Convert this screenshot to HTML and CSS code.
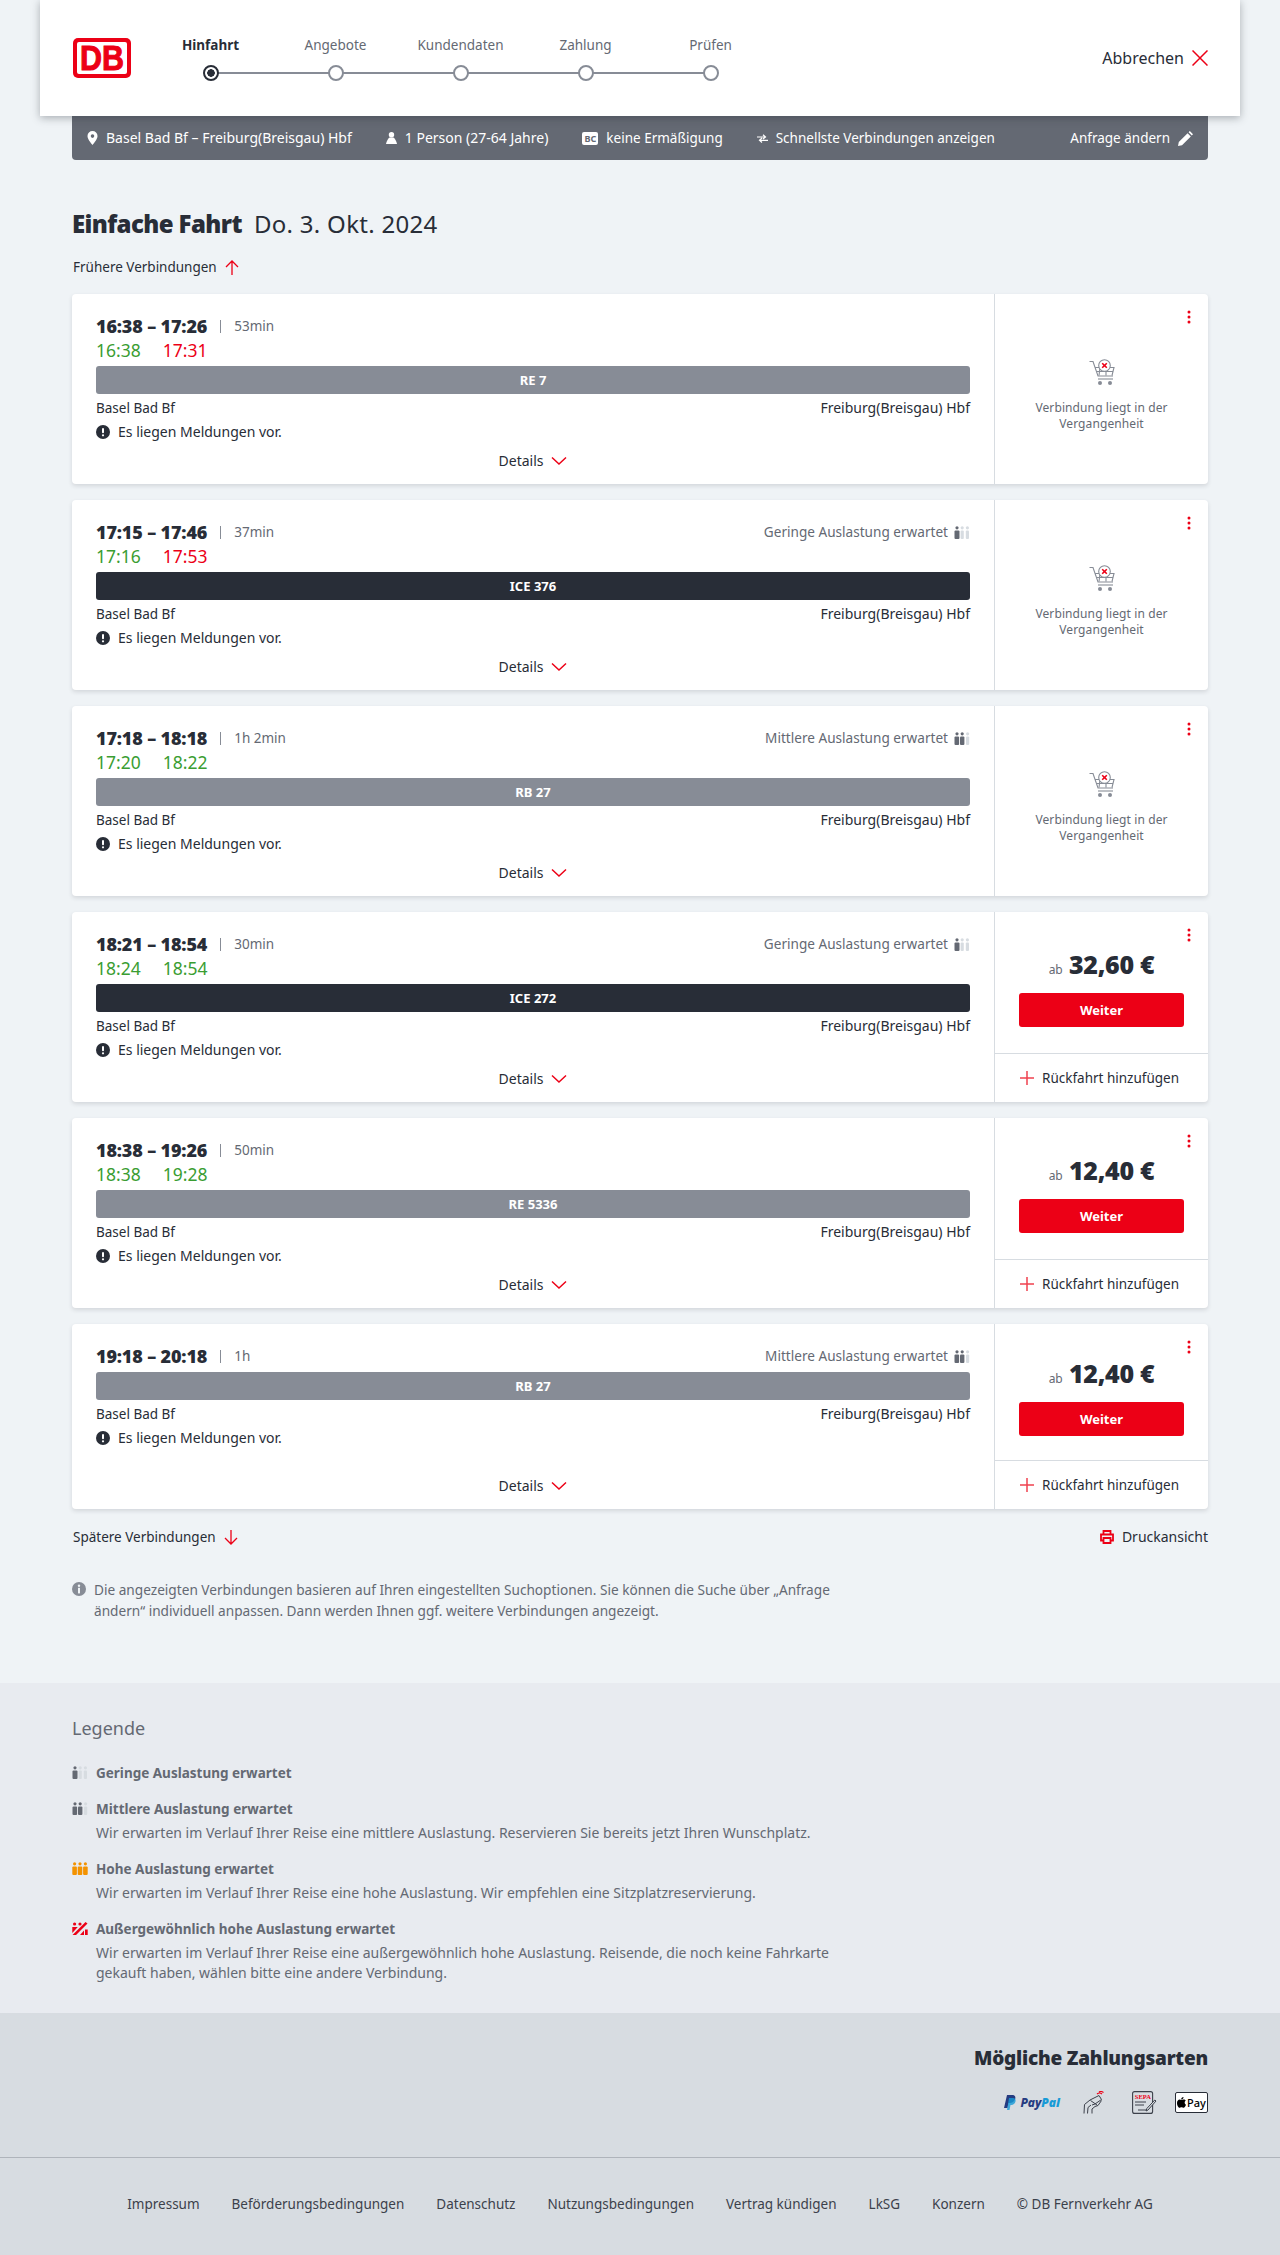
FILE: index.html
```html
<!DOCTYPE html>
<html lang="de">
<head>
  <meta charset="UTF-8">
  <meta name="viewport" content="width=device-width, initial-scale=1.0">
  <title>Hinfahrt - Verbindungen</title>
  <link rel="stylesheet" href="styles.css">
</head>
<body>
  <svg class="icon-defs" xmlns="http://www.w3.org/2000/svg">
    <symbol id="load-1" viewBox="0 0 16 13">
      <circle cx="3" cy="1.8" r="1.6" fill="#646973"/><rect x="0.5" y="4.5" width="5" height="8.5" rx="1" fill="#646973"/>
      <circle cx="8.2" cy="1.8" r="1.6" fill="#d7dce1"/><rect x="6.6" y="4.5" width="3.2" height="8.5" rx="1" fill="#d7dce1"/>
      <circle cx="13.4" cy="1.8" r="1.6" fill="#d7dce1"/><rect x="11.8" y="4.5" width="3.2" height="8.5" rx="1" fill="#d7dce1"/>
    </symbol>
    <symbol id="load-2" viewBox="0 0 16 13">
      <circle cx="3" cy="1.8" r="1.6" fill="#646973"/><rect x="0.5" y="4.5" width="4.6" height="8.5" rx="1" fill="#646973"/>
      <circle cx="8.2" cy="1.8" r="1.6" fill="#646973"/><rect x="6" y="4.5" width="4.4" height="8.5" rx="1" fill="#646973"/>
      <circle cx="13.6" cy="1.8" r="1.6" fill="#d7dce1"/><rect x="12" y="4.5" width="3.2" height="8.5" rx="1" fill="#d7dce1"/>
    </symbol>
    <symbol id="load-3" viewBox="0 0 16 13">
      <circle cx="2.6" cy="1.8" r="1.6" fill="#f39200"/><rect x="0.3" y="4.5" width="4.6" height="8.5" rx="1" fill="#f39200"/>
      <circle cx="8" cy="1.8" r="1.6" fill="#f39200"/><rect x="5.7" y="4.5" width="4.6" height="8.5" rx="1" fill="#f39200"/>
      <circle cx="13.4" cy="1.8" r="1.6" fill="#f39200"/><rect x="11.1" y="4.5" width="4.6" height="8.5" rx="1" fill="#f39200"/>
    </symbol>
    <symbol id="load-4" viewBox="0 0 16 13">
      <circle cx="2.6" cy="2" r="1.6" fill="#ec0016"/><circle cx="8" cy="2" r="1.6" fill="#ec0016"/>
      <path d="M0.3 5h5.500L0.3 11zM13.500 0l2 1.500L4 13H0.500zM8 13l4-4.500V13zM13 7.500h2.700V13H13z" fill="#ec0016"/>
    </symbol>
    <symbol id="kebab" viewBox="0 0 6 14">
      <circle cx="3" cy="2" r="1.5" fill="#ec0016"/><circle cx="3" cy="7" r="1.5" fill="#ec0016"/><circle cx="3" cy="12" r="1.5" fill="#ec0016"/>
    </symbol>
    <symbol id="chevron" viewBox="0 0 16 10">
      <path d="M1 1.5l7 6.5 7-6.5" fill="none" stroke="#ec0016" stroke-width="1.5"/>
    </symbol>
    <symbol id="warn" viewBox="0 0 14 14">
      <circle cx="7" cy="7" r="7" fill="#282d37"/><rect x="6" y="3" width="2" height="5.2" rx="1" fill="#fff"/><circle cx="7" cy="10.3" r="1.1" fill="#fff"/>
    </symbol>
    <symbol id="cart" viewBox="0 0 26 26">
      <g fill="none" stroke="#878c96" stroke-width="1.100">
        <path d="M0.500 2.500h3.500L9 17h15"/>
        <path d="M6 8.500h19l-2 8M7.500 12.500h16.500M11 8.500l-1 8M17 12.500v4"/>
        <circle cx="15.500" cy="6.500" r="5.800" fill="#fff"/>
        <path d="M13.200 4.200l4.600 4.600M17.800 4.200l-4.600 4.600" stroke="#ec0016" stroke-width="1.600"/>
      </g>
      <path d="M9 20h15" stroke="#878c96" stroke-width="1.100"/>
      <circle cx="11" cy="24" r="2" fill="#878c96"/><circle cx="21" cy="24" r="2" fill="#878c96"/>
    </symbol>
    <symbol id="plus" viewBox="0 0 14 14">
      <path d="M7 0v14M0 7h14" stroke="#f0414f" stroke-width="1.500"/>
    </symbol>
  </svg>

  <header class="top-bar">
    <svg class="db-logo" width="58" height="40" viewBox="0 0 58 40">
      <rect width="58" height="40" rx="5" fill="#ec0016"/>
      <rect x="4" y="4" width="50" height="32" rx="2" fill="#fff"/>
      <text x="29" y="32" text-anchor="middle" textLength="44" lengthAdjust="spacingAndGlyphs" class="db-letters">DB</text>
    </svg>
    <ol class="stepper">
      <li class="step step-active"><span class="step-label">Hinfahrt</span><span class="step-dot"></span></li>
      <li class="step"><span class="step-label">Angebote</span><span class="step-dot"></span></li>
      <li class="step"><span class="step-label">Kundendaten</span><span class="step-dot"></span></li>
      <li class="step"><span class="step-label">Zahlung</span><span class="step-dot"></span></li>
      <li class="step"><span class="step-label">Prüfen</span><span class="step-dot"></span></li>
    </ol>
    <a class="cancel">Abbrechen
      <svg width="16" height="16" viewBox="0 0 16 16"><path d="M0.500 0.500l15 15M15.500 0.500l-15 15" stroke="#ec0016" stroke-width="1.500"/></svg>
    </a>
  </header>

  <main class="page">
    <div class="query-bar">
      <span class="query-item query-wide">
        <svg width="11" height="14" viewBox="0 0 11 14"><path fill-rule="evenodd" d="M5.500 0a5 5 0 0 1 5 5c0 3-3 6.500-5 9-2-2.500-5-6-5-9a5 5 0 0 1 5-5zm0 3.300a1.800 1.800 0 1 0 0 3.600 1.800 1.800 0 0 0 0-3.600z" fill="#fff"/></svg>
        Basel Bad Bf – Freiburg(Breisgau) Hbf</span>
      <span class="query-item query-wide">
        <svg width="11" height="12" viewBox="0 0 11 12"><circle cx="5.500" cy="2.800" r="2.700" fill="#fff"/><path d="M3.500 5.500h4c1.500 1 3 4 3.500 6.500H0c.5-2.500 2-5.500 3.500-6.500z" fill="#fff"/></svg>
        1 Person (27-64 Jahre)</span>
      <span class="query-item">
        <span class="bc-badge">BC</span>
        keine Ermäßigung</span>
      <span class="query-item">
        <svg width="11" height="9" viewBox="0 0 11 9"><path d="M0 3h8M6 .8L8.500 3 6 5M11 6.300H3M5 4l-2.500 2.300L5 8.500" fill="none" stroke="#fff" stroke-width="1.200"/></svg>
        Schnellste Verbindungen anzeigen</span>
      <span class="query-item query-edit">Anfrage ändern
        <svg width="15" height="15" viewBox="0 0 15 15"><path d="M0 15l.8-4L9.600 2.200l3.200 3.200L4 14.200zM10.600 1.200L11.800 0 15 3.200 13.800 4.400z" fill="#fff"/></svg>
      </span>
    </div>

    <h1 class="day-title"><strong>Einfache Fahrt</strong> <span>Do. 3. Okt. 2024</span></h1>

    <a class="more-link more-earlier">Frühere Verbindungen
      <svg width="14" height="15" viewBox="0 0 14 15"><path d="M7 15V1M1 7l6-6 6 6" fill="none" stroke="#ec0016" stroke-width="1.300"/></svg>
    </a>

    <article class="card">
      <div class="card-main">
        <div class="time-row"><span class="time-range">16:38 – 17:26</span><span class="duration">53min</span></div>
        <div class="real-row"><span class="on-time">16:38</span><span class="late">17:31</span></div>
        <div class="train train-regio">RE 7</div>
        <div class="stations"><span class="from">Basel Bad Bf</span><span>Freiburg(Breisgau) Hbf</span></div>
        <div class="notice"><svg width="14" height="14"><use href="#warn"/></svg>Es liegen Meldungen vor.</div>
        <a class="details">Details <svg width="16" height="10"><use href="#chevron"/></svg></a>
      </div>
      <aside class="card-side side-past">
        <svg class="kebab" width="6" height="14"><use href="#kebab"/></svg>
        <svg width="26" height="26"><use href="#cart"/></svg>
        <p>Verbindung liegt in der Vergangenheit</p>
      </aside>
    </article>

    <article class="card">
      <div class="card-main">
        <div class="time-row"><span class="time-range">17:15 – 17:46</span><span class="duration">37min</span>
          <span class="load">Geringe Auslastung erwartet <svg width="16" height="13"><use href="#load-1"/></svg></span></div>
        <div class="real-row"><span class="on-time">17:16</span><span class="late">17:53</span></div>
        <div class="train train-ice">ICE 376</div>
        <div class="stations"><span class="from">Basel Bad Bf</span><span>Freiburg(Breisgau) Hbf</span></div>
        <div class="notice"><svg width="14" height="14"><use href="#warn"/></svg>Es liegen Meldungen vor.</div>
        <a class="details">Details <svg width="16" height="10"><use href="#chevron"/></svg></a>
      </div>
      <aside class="card-side side-past">
        <svg class="kebab" width="6" height="14"><use href="#kebab"/></svg>
        <svg width="26" height="26"><use href="#cart"/></svg>
        <p>Verbindung liegt in der Vergangenheit</p>
      </aside>
    </article>

    <article class="card">
      <div class="card-main">
        <div class="time-row"><span class="time-range">17:18 – 18:18</span><span class="duration">1h 2min</span>
          <span class="load">Mittlere Auslastung erwartet <svg width="16" height="13"><use href="#load-2"/></svg></span></div>
        <div class="real-row"><span class="on-time">17:20</span><span class="on-time">18:22</span></div>
        <div class="train train-regio">RB 27</div>
        <div class="stations"><span class="from">Basel Bad Bf</span><span>Freiburg(Breisgau) Hbf</span></div>
        <div class="notice"><svg width="14" height="14"><use href="#warn"/></svg>Es liegen Meldungen vor.</div>
        <a class="details">Details <svg width="16" height="10"><use href="#chevron"/></svg></a>
      </div>
      <aside class="card-side side-past">
        <svg class="kebab" width="6" height="14"><use href="#kebab"/></svg>
        <svg width="26" height="26"><use href="#cart"/></svg>
        <p>Verbindung liegt in der Vergangenheit</p>
      </aside>
    </article>

    <article class="card">
      <div class="card-main">
        <div class="time-row"><span class="time-range">18:21 – 18:54</span><span class="duration">30min</span>
          <span class="load">Geringe Auslastung erwartet <svg width="16" height="13"><use href="#load-1"/></svg></span></div>
        <div class="real-row"><span class="on-time">18:24</span><span class="on-time">18:54</span></div>
        <div class="train train-ice">ICE 272</div>
        <div class="stations"><span class="from">Basel Bad Bf</span><span>Freiburg(Breisgau) Hbf</span></div>
        <div class="notice"><svg width="14" height="14"><use href="#warn"/></svg>Es liegen Meldungen vor.</div>
        <a class="details">Details <svg width="16" height="10"><use href="#chevron"/></svg></a>
      </div>
      <aside class="card-side">
        <svg class="kebab" width="6" height="14"><use href="#kebab"/></svg>
        <div class="offer">
          <div class="price"><small>ab</small> 32,60 €</div>
          <button class="next-btn">Weiter</button>
        </div>
        <a class="return-link"><svg width="14" height="14"><use href="#plus"/></svg>Rückfahrt hinzufügen</a>
      </aside>
    </article>

    <article class="card">
      <div class="card-main">
        <div class="time-row"><span class="time-range">18:38 – 19:26</span><span class="duration">50min</span></div>
        <div class="real-row"><span class="on-time">18:38</span><span class="on-time">19:28</span></div>
        <div class="train train-regio">RE 5336</div>
        <div class="stations"><span class="from">Basel Bad Bf</span><span>Freiburg(Breisgau) Hbf</span></div>
        <div class="notice"><svg width="14" height="14"><use href="#warn"/></svg>Es liegen Meldungen vor.</div>
        <a class="details">Details <svg width="16" height="10"><use href="#chevron"/></svg></a>
      </div>
      <aside class="card-side">
        <svg class="kebab" width="6" height="14"><use href="#kebab"/></svg>
        <div class="offer">
          <div class="price"><small>ab</small> 12,40 €</div>
          <button class="next-btn">Weiter</button>
        </div>
        <a class="return-link"><svg width="14" height="14"><use href="#plus"/></svg>Rückfahrt hinzufügen</a>
      </aside>
    </article>

    <article class="card card-short">
      <div class="card-main">
        <div class="time-row"><span class="time-range">19:18 – 20:18</span><span class="duration">1h</span>
          <span class="load">Mittlere Auslastung erwartet <svg width="16" height="13"><use href="#load-2"/></svg></span></div>
        <div class="train train-regio">RB 27</div>
        <div class="stations"><span class="from">Basel Bad Bf</span><span>Freiburg(Breisgau) Hbf</span></div>
        <div class="notice"><svg width="14" height="14"><use href="#warn"/></svg>Es liegen Meldungen vor.</div>
        <a class="details">Details <svg width="16" height="10"><use href="#chevron"/></svg></a>
      </div>
      <aside class="card-side">
        <svg class="kebab" width="6" height="14"><use href="#kebab"/></svg>
        <div class="offer">
          <div class="price"><small>ab</small> 12,40 €</div>
          <button class="next-btn">Weiter</button>
        </div>
        <a class="return-link"><svg width="14" height="14"><use href="#plus"/></svg>Rückfahrt hinzufügen</a>
      </aside>
    </article>

    <div class="after-list">
      <a class="more-link">Spätere Verbindungen
        <svg width="14" height="15" viewBox="0 0 14 15"><path d="M7 0v14M1 8l6 6 6-6" fill="none" stroke="#ec0016" stroke-width="1.300"/></svg>
      </a>
      <a class="more-link print-link">
        <svg width="14" height="14" viewBox="0 0 14 14"><path d="M3.500 4V1h7v3M3.500 10.500H1V4.500h12v6h-2.500M3.500 8h7v5h-7z" fill="none" stroke="#ec0016" stroke-width="1.800"/></svg>
        Druckansicht</a>
    </div>

    <p class="hint">
      <svg width="14" height="14" viewBox="0 0 14 14"><circle cx="7" cy="7" r="7" fill="#878c96"/><circle cx="7" cy="3.700" r="1.200" fill="#eff3f6"/><rect x="6" y="5.800" width="2" height="5.600" fill="#eff3f6"/></svg>
      <span>Die angezeigten Verbindungen basieren auf Ihren eingestellten Suchoptionen. Sie können die Suche über „Anfrage ändern“ individuell anpassen. Dann werden Ihnen ggf. weitere Verbindungen angezeigt.</span>
    </p>
  </main>

  <section class="legend">
    <h2>Legende</h2>
    <div class="legend-item">
      <svg width="16" height="13"><use href="#load-1"/></svg>
      <div><h3>Geringe Auslastung erwartet</h3></div>
    </div>
    <div class="legend-item">
      <svg width="16" height="13"><use href="#load-2"/></svg>
      <div><h3>Mittlere Auslastung erwartet</h3>
        <p>Wir erwarten im Verlauf Ihrer Reise eine mittlere Auslastung. Reservieren Sie bereits jetzt Ihren Wunschplatz.</p></div>
    </div>
    <div class="legend-item">
      <svg width="16" height="13"><use href="#load-3"/></svg>
      <div><h3>Hohe Auslastung erwartet</h3>
        <p>Wir erwarten im Verlauf Ihrer Reise eine hohe Auslastung. Wir empfehlen eine Sitzplatzreservierung.</p></div>
    </div>
    <div class="legend-item">
      <svg width="16" height="13"><use href="#load-4"/></svg>
      <div><h3>Außergewöhnlich hohe Auslastung erwartet</h3>
        <p>Wir erwarten im Verlauf Ihrer Reise eine außergewöhnlich hohe Auslastung. Reisende, die noch keine Fahrkarte gekauft haben, wählen bitte eine andere Verbindung.</p></div>
    </div>
  </section>

  <footer class="site-footer">
    <div class="payments">
      <h2>Mögliche Zahlungsarten</h2>
      <div class="pay-icons">
        <span class="paypal"><svg width="12" height="15" viewBox="0 0 12 15"><path d="M3 0h5c3 0 4 2 3 4.500S7.500 8 6 8H4.500L3.500 13H0z" fill="#253b80"/><path d="M5 3h4c2 0 3 1.500 2.500 3.500S9 10 7.500 10H6.500L5.500 15H3z" fill="#179bd7" opacity=".8"/></svg><i>Pay<b>Pal</b></i></span>
        <svg class="pay-nfc" width="22" height="23" viewBox="0 0 22 23"><g fill="none" stroke="#3c414b" stroke-width="1"><path d="M1 22.500l.5-9L7 9l9-4.500 2.500 4L12 13l-3 1"/><path d="M4.500 22.500l.5-6 3-2.500M9 22.500V18l3-2.500 3-1 3.500-5M7.500 9.500L14 14"/></g><path d="M14 3c1.500-1.200 3.500-1.200 5 0M16 1c1.200-.7 3-.7 4.500.5" fill="none" stroke="#ec0016" stroke-width="1.200"/></svg>
        <svg class="pay-sepa" width="25" height="23" viewBox="0 0 25 23"><rect x=".6" y=".6" width="20" height="21.800" rx="2" fill="none" stroke="#3c414b" stroke-width="1.100"/><text x="2.800" y="8" class="sepa-text">SEPA</text><path d="M3 11h11M3 14h9M6 19h8" stroke="#3c414b" stroke-width="1"/><path d="M24 10l-8 9-2 1 .8-2.500 8-8.500z" fill="#d7dce1" stroke="#3c414b" stroke-width="1"/></svg>
        <span class="apple-pay"><svg width="9" height="11" viewBox="0 0 9 11"><path d="M6.500 0c.1 1.300-1 2.500-2.300 2.400C4 1.200 5.300.1 6.500 0zM4.300 3c.6 0 1.400-.6 2.400-.5 1 0 1.700.5 2.100 1.100-1.700 1.100-1.400 3.500.2 4.200-.5 1.300-1.400 3-2.500 3-.8 0-1-.5-2-.5s-1.200.5-2 .5C1.300 10.800 0 8.200 0 6c0-2.200 1.400-3.500 2.600-3.500.7 0 1.300.5 1.700.5z" fill="#000"/></svg>Pay</span>
      </div>
    </div>
    <nav class="footer-links">
      <a>Impressum</a>
      <a>Beförderungsbedingungen</a>
      <a>Datenschutz</a>
      <a>Nutzungsbedingungen</a>
      <a>Vertrag kündigen</a>
      <a>LkSG</a>
      <a>Konzern</a>
      <a>© DB Fernverkehr AG</a>
    </nav>
  </footer>
</body>
</html>
```

FILE: styles.css
```css
* {
  box-sizing: border-box;
}
body {
  margin: 0;
  background-color: #eff3f6;
  color: #282d37;
  font-family: "Noto Sans", Arial, sans-serif;
  font-size: 14px;
  line-height: 20px;
}
h1, h2, h3, p, ol {
  margin: 0;
  padding: 0;
}
svg {
  flex: none;
}
.icon-defs {
  display: none;
}

/* header */
.top-bar {
  position: relative;
  z-index: 2;
  display: flex;
  align-items: center;
  width: 1200px;
  height: 116px;
  margin: 0 40px;
  padding: 0 32px 0 33px;
  background-color: #fff;
  box-shadow: 0 2px 8px rgba(40, 45, 55, 0.35);
}
.db-letters {
  font-family: "Liberation Sans", Arial, sans-serif;
  font-size: 35px;
  font-weight: 700;
  fill: #ec0016;
  stroke: #ec0016;
  stroke-width: 1px;
}
.stepper {
  display: flex;
  margin-left: 17px;
  list-style: none;
}
.step {
  position: relative;
  display: flex;
  flex-direction: column;
  align-items: center;
  gap: 10px;
  width: 125px;
  color: #646973;
  font-size: 13.500px;
}
.step:not(:last-child)::after {
  content: "";
  position: absolute;
  left: 62px;
  bottom: 7px;
  width: 125px;
  height: 2px;
  background-color: #878c96;
}
.step-dot {
  position: relative;
  z-index: 1;
  width: 16px;
  height: 16px;
  border: 2px solid #878c96;
  border-radius: 50%;
  background-color: #fff;
}
.step-active {
  color: #282d37;
  font-weight: 700;
}
.step-active .step-dot {
  border-color: #282d37;
  background: radial-gradient(circle, #282d37 0 3.5px, #fff 4px);
}
.cancel {
  display: flex;
  align-items: center;
  gap: 8px;
  margin-left: auto;
  font-size: 16px;
}

/* main column */
.page {
  width: 1136px;
  margin: 0 auto;
}
.query-bar {
  display: flex;
  align-items: center;
  gap: 34px;
  height: 44px;
  padding: 0 15px;
  border-radius: 0 0 4px 4px;
  background-color: #646973;
  color: #fff;
  font-size: 13.500px;
}
.query-item {
  display: flex;
  align-items: center;
  gap: 8px;
}
.query-wide {
  font-size: 14px;
}
.query-edit {
  margin-left: auto;
}
.bc-badge {
  width: 16px;
  height: 13px;
  border-radius: 2px;
  background-color: #fff;
  color: #646973;
  font-size: 9px;
  font-weight: 700;
  line-height: 13px;
  text-align: center;
}
.day-title {
  display: flex;
  gap: 12px;
  margin-top: 46px;
  font-size: 24px;
  font-weight: 400;
  line-height: 36px;
}
.day-title strong {
  font-weight: 900;
  letter-spacing: -0.6px;
}
.day-title span {
  letter-spacing: 0.3px;
}
.more-link {
  display: flex;
  align-items: center;
  gap: 8px;
  font-size: 13.500px;
}
.print-link {
  font-size: 14px;
}
.more-earlier {
  margin: 15px 0 17px;
  padding-left: 1px;
}

/* connection cards */
.card {
  display: flex;
  height: 190px;
  margin-bottom: 16px;
  border-radius: 4px;
  background-color: #fff;
  box-shadow: 0 2px 4px rgba(40, 45, 55, 0.14);
}
.card-short {
  height: 185px;
}
.card-main {
  display: flex;
  flex-direction: column;
  width: 923px;
  padding: 20px 24px 13px;
  border-right: 1px solid #d7dce1;
}
.time-row {
  display: flex;
  align-items: center;
  height: 24px;
}
.time-range {
  font-size: 18px;
  font-weight: 900;
  letter-spacing: -0.15px;
}
.duration {
  margin-left: 13px;
  padding-left: 14px;
  color: #646973;
  font-size: 13.500px;
  background: linear-gradient(#878c96, #878c96) left center / 1px 13px no-repeat;
}
.load {
  display: flex;
  align-items: center;
  gap: 6px;
  margin-left: auto;
  color: #646973;
  font-size: 13.600px;
}
.real-row {
  display: flex;
  gap: 22px;
  height: 24px;
  font-size: 17.500px;
  line-height: 24px;
}
.on-time {
  color: #3a9d32;
}
.late {
  color: #ec0016;
}
.train {
  height: 28px;
  margin-top: 4px;
  border-radius: 3px;
  color: #fff;
  font-size: 13px;
  font-weight: 700;
  line-height: 28px;
  text-align: center;
}
.train-regio {
  background-color: #878c96;
}
.train-ice {
  background-color: #282d37;
}
.stations {
  display: flex;
  justify-content: space-between;
  margin-top: 4px;
}
.from {
  font-size: 13.500px;
}
.notice {
  display: flex;
  align-items: center;
  gap: 8px;
  margin-top: 4px;
}
.details {
  display: flex;
  align-items: center;
  justify-content: center;
  gap: 8px;
  margin-top: auto;
}
.card-side {
  position: relative;
  display: flex;
  flex-direction: column;
  flex: 1;
}
.kebab {
  position: absolute;
  top: 16px;
  right: 16px;
}
.side-past {
  align-items: center;
  justify-content: center;
  gap: 15px;
  padding: 13px 20px 0;
  color: #646973;
  font-size: 12px;
  letter-spacing: 0.1px;
  line-height: 16px;
  text-align: center;
}
.offer {
  display: flex;
  flex: 1;
  flex-direction: column;
  justify-content: center;
  padding: 12px 24px 0;
}
.price {
  height: 42px;
  font-size: 25px;
  font-weight: 900;
  letter-spacing: -0.3px;
  line-height: 27px;
  text-align: center;
}
.price small {
  color: #646973;
  font-size: 12px;
  font-weight: 400;
  letter-spacing: 0;
}
.next-btn {
  height: 34px;
  padding: 0;
  border: none;
  border-radius: 3px;
  background-color: #ec0016;
  color: #fff;
  font-family: "Noto Sans", Arial, sans-serif;
  font-size: 13px;
  font-weight: 700;
}
.return-link {
  display: flex;
  align-items: center;
  gap: 8px;
  height: 49px;
  padding-left: 25px;
  border-top: 1px solid #d7dce1;
  font-size: 13.500px;
}
.after-list {
  display: flex;
  justify-content: space-between;
  margin-top: 18px;
  padding-left: 1px;
}
.hint {
  display: flex;
  gap: 8px;
  width: 780px;
  margin-top: 32px;
  color: #646973;
  font-size: 13.650px;
  line-height: 21px;
}
.hint svg {
  margin-top: 3px;
}

/* legend */
.legend {
  height: 330px;
  margin-top: 62px;
  padding: 32px 72px 0;
  background-color: #e8ebf0;
  color: #646973;
}
.legend h2 {
  margin-bottom: 22px;
  font-size: 18px;
  font-weight: 400;
  line-height: 26px;
}
.legend-item {
  display: flex;
  gap: 8px;
  width: 800px;
  margin-bottom: 16px;
}
.legend-item svg {
  margin-top: 3px;
}
.legend-item h3 {
  font-size: 13.500px;
  font-weight: 700;
}
.legend-item p {
  margin-top: 4px;
}

/* footer */
.site-footer {
  background-color: #d7dce1;
}
.payments {
  display: flex;
  flex-direction: column;
  align-items: flex-end;
  height: 145px;
  padding: 30px 72px 0;
  border-bottom: 1px solid #afb4bb;
}
.payments h2 {
  font-size: 19px;
  font-weight: 900;
  letter-spacing: -0.2px;
  line-height: 30px;
}
.pay-icons {
  display: flex;
  align-items: center;
  margin-top: 18px;
}
.paypal {
  display: flex;
  align-items: center;
  gap: 4px;
  color: #253b80;
  font-size: 12px;
  font-weight: 800;
}
.paypal b {
  color: #179bd7;
}
.pay-nfc {
  margin-left: 23px;
}
.pay-sepa {
  margin: 0 18px 0 27px;
}
.sepa-text {
  font-family: "Liberation Serif", serif;
  font-size: 6.500px;
  font-weight: 700;
  fill: #ec0016;
}
.apple-pay {
  display: flex;
  align-items: center;
  justify-content: center;
  gap: 1px;
  width: 33px;
  height: 21px;
  border: 1px solid #282d37;
  border-radius: 2px;
  background-color: #fff;
  color: #000;
  font-size: 11px;
  font-weight: 500;
}
.footer-links {
  display: flex;
  justify-content: center;
  gap: 32px;
  height: 97px;
  padding-top: 36px;
  color: #3c414b;
  font-size: 13.500px;
}
```
